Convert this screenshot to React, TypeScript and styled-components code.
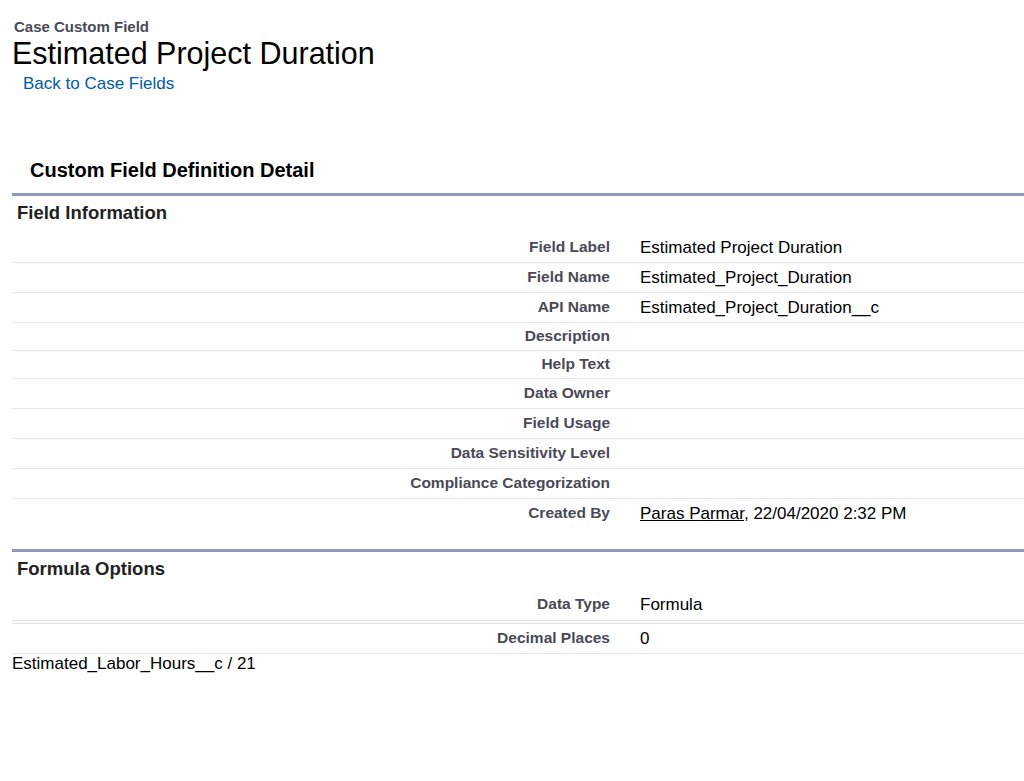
import { createGlobalStyle, styled } from "styled-components";

const GlobalStyle = createGlobalStyle`
  html, body {
    margin: 0;
    background: #fff;
    font-family: "Liberation Sans", Arial, sans-serif;
    color: #000;
  }
`;

const Page = styled.div`
  padding: 18px 0 0 12px;
`;

const PageHeader = styled.div`
  display: flex;
  flex-direction: column;
  align-items: flex-start;
`;

const Kind = styled.div`
  font-size: 15px;
  font-weight: bold;
  color: #4a4a56;
  line-height: 18px;
  margin-left: 2px;
`;

const Title = styled.h1`
  margin: 0;
  font-size: 30.5px;
  font-weight: normal;
  line-height: 34px;
`;

const BackLink = styled.a`
  margin: 4px 0 0 11px;
  font-size: 17px;
  line-height: 20px;
  color: #015ba7;
  text-decoration: none;
  cursor: pointer;
`;

const DetailTitle = styled.h2`
  margin: 64px 0 0 18px;
  font-size: 20px;
  font-weight: bold;
  line-height: 24px;
  color: #000;
`;

const Section = styled.section<{ $gap: number }>`
  margin-top: ${(p) => p.$gap}px;
  border-top: 3px solid #8e9bb8;
`;

const SectionHeading = styled.h3`
  margin: 0;
  padding: 6px 0 0 5px;
  height: 37px;
  box-sizing: border-box;
  font-size: 18.5px;
  font-weight: bold;
  line-height: 22px;
  color: #222;
`;

const Row = styled.div<{ $height: number; $border: "none" | "single" | "double" }>`
  display: grid;
  grid-template-columns: 598px 1fr;
  column-gap: 30px;
  align-items: center;
  height: ${(p) => p.$height}px;
  border-bottom: ${(p) =>
    p.$border === "single"
      ? "1px solid #e5e5e8"
      : p.$border === "double"
      ? "4px double #e3e3e6"
      : "none"};
`;

const Label = styled.div`
  text-align: right;
  font-size: 15.5px;
  font-weight: bold;
  color: #4a4a56;
  margin-top: -2px;
`;

const Value = styled.div`
  font-size: 17px;
  color: #000;
`;

const UserLink = styled.a`
  color: #000;
  text-decoration: underline;
  cursor: pointer;
`;

const Footnote = styled.div`
  font-size: 17px;
  line-height: 20px;
  color: #000;
`;

type Field = {
  label: string;
  value?: React.ReactNode;
  height?: number;
  border?: "none" | "single" | "double";
};

const fieldInfo: Field[] = [
  { label: "Field Label", value: "Estimated Project Duration" },
  { label: "Field Name", value: "Estimated_Project_Duration" },
  { label: "API Name", value: "Estimated_Project_Duration__c" },
  { label: "Description", height: 27 },
  { label: "Help Text", height: 27 },
  { label: "Data Owner" },
  { label: "Field Usage" },
  { label: "Data Sensitivity Level" },
  { label: "Compliance Categorization" },
  {
    label: "Created By",
    border: "none",
    value: (
      <>
        <UserLink>Paras Parmar</UserLink>, 22/04/2020 2:32 PM
      </>
    ),
  },
];

const formulaOptions: Field[] = [
  { label: "Data Type", value: "Formula", height: 31, border: "double" },
  { label: "Decimal Places", value: "0" },
];

const FieldRows = ({ fields }: { fields: Field[] }) => (
  <>
    {fields.map((f) => (
      <Row key={f.label} $height={f.height ?? 29} $border={f.border ?? "single"}>
        <Label>{f.label}</Label>
        <Value>{f.value}</Value>
      </Row>
    ))}
  </>
);

export default function App() {
  return (
    <>
      <GlobalStyle />
      <Page>
        <PageHeader>
          <Kind>Case Custom Field</Kind>
          <Title>Estimated Project Duration</Title>
          <BackLink>Back to Case Fields</BackLink>
        </PageHeader>

        <DetailTitle>Custom Field Definition Detail</DetailTitle>

        <Section $gap={11}>
          <SectionHeading>Field Information</SectionHeading>
          <FieldRows fields={fieldInfo} />
        </Section>

        <Section $gap={21}>
          <SectionHeading>Formula Options</SectionHeading>
          <FieldRows fields={formulaOptions} />
        </Section>

        <Footnote>Estimated_Labor_Hours__c / 21</Footnote>
      </Page>
    </>
  );
}
